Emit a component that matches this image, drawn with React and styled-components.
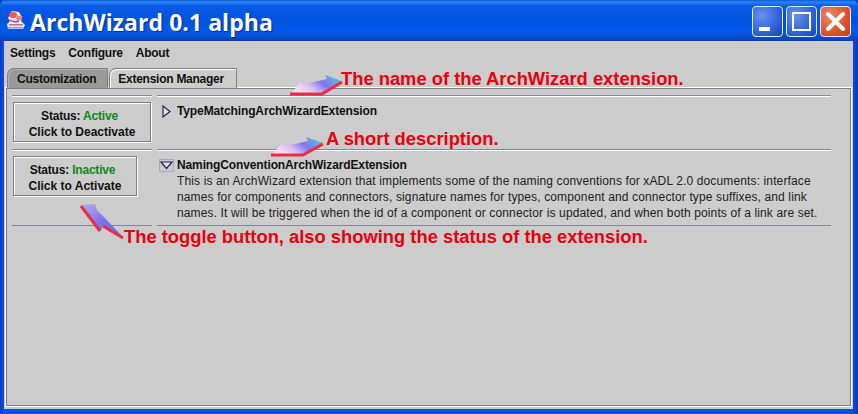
import React from "react";
import styled, { createGlobalStyle } from "styled-components";

const Global = createGlobalStyle`
  html, body { margin: 0; padding: 0; background: #0a3fd0; overflow: hidden; }
  #root { width: 858px; height: 414px; }
`;

const Frame = styled.div`
  position: relative;
  width: 858px;
  height: 414px;
  display: flex;
  flex-direction: column;
  background: linear-gradient(90deg, #0638c8 0, #0a50e4 4px, #0a50e4 852px, #0638c8 858px);
  font-family: "Liberation Sans", Arial, sans-serif;
  overflow: hidden;
`;

const TitleBar = styled.div`
  height: 41px;
  flex: none;
  display: flex;
  align-items: center;
  padding: 0 7px 0 6px;
  gap: 4px;
  border-radius: 6px 6px 0 0;
  background: linear-gradient(180deg, #0a55d8 0, #2a86f4 2px, #0a5ce6 6px, #0053e0 18px, #0058ea 32px, #0a46c8 39px, #0a3cb4 41px);
`;

const Title = styled.div`
  flex: 1;
  color: #fff;
  font-family: "Open Sans", sans-serif;
  font-weight: 700;
  font-size: 23px;
  line-height: 26px;
  letter-spacing: 0.05px;
  margin-top: 2px;
  text-shadow: 1px 1px 1px #0a2a90;
  white-space: nowrap;
`;

const WinButtons = styled.div`
  display: flex;
  gap: 3px;
  margin-top: 2px;
`;

const WinButton = styled.div`
  width: 31px;
  height: 31px;
  box-sizing: border-box;
  border: 1px solid #e8eefc;
  border-radius: 4px;
  display: flex;
  align-items: center;
  justify-content: center;
  background: ${(p) => (p.$close
    ? "radial-gradient(circle at 30% 30%, #e88a62, #d8502a 65%, #c23c18)"
    : "radial-gradient(circle at 30% 30%, #6a90ea, #2c5cd8 65%, #1c42b8)")};
`;

const Body = styled.div`
  flex: 1;
  min-height: 0;
  margin: 0 5px 5px 4px;
  background: #cccccc;
  display: flex;
  flex-direction: column;
`;

const MenuBar = styled.div`
  height: 23px;
  flex: none;
  display: flex;
  align-items: center;
  gap: 13px;
  padding-left: 6px;
  font-size: 12px;
  font-weight: 700;
  letter-spacing: -0.25px;
  color: #111;
`;

const Tabs = styled.div`
  display: flex;
  align-items: flex-end;
  height: 24px;
  flex: none;
  padding-left: 3px;
`;

const Tab = styled.div`
  height: 20px;
  box-sizing: border-box;
  padding: 0 ${(p) => (p.$selected ? 12 : 11)}px 0 ${(p) => (p.$selected ? 8 : 9)}px;
  display: flex;
  align-items: center;
  font-size: 12px;
  font-weight: 700;
  letter-spacing: -0.26px;
  color: #111;
  border: 1px solid #808080;
  border-bottom: none;
  border-radius: 7px 0 0 0;
  margin-right: 1px;
  position: relative;
  z-index: 1;
  background: ${(p) => (p.$selected ? "#cccccc" : "#9a9a9a")};
  box-shadow: inset 1px 1px 0 ${(p) => (p.$selected ? "#fff" : "#b0b0b0")};
`;

const TabPanel = styled.div`
  flex: 1;
  min-height: 0;
  margin: 0 2px 3px 2px;
  border: 1px solid #808080;
  padding: 7px 19px 0 5px;
  box-shadow: 0 0 0 1px #fff;
`;

const Grid = styled.div`
  display: grid;
  grid-template-columns: 140px 1fr;
  column-gap: 5px;
  margin-top: -1px;
`;

const Cell = styled.div`
  border-top: 1px solid #808a98;
  box-shadow: inset 0 1px 0 #fff;
  display: flex;
  min-height: ${(p) => p.$h}px;
  box-sizing: border-box;
  align-items: flex-start;
`;

const ToggleButton = styled.div`
  margin: 6px 0 0 1px;
  width: ${(p) => p.$w}px;
  height: 40px;
  padding-top: 3px;
  box-sizing: border-box;
  border: 1px solid #808080;
  box-shadow: 1px 1px 0 #fff, inset 1px 1px 0 #fff;
  display: flex;
  flex-direction: column;
  align-items: center;
  justify-content: center;
  font-size: 12px;
  line-height: 16px;
  font-weight: 700;
  color: #111;
`;

const StatusLine = styled.div`
  letter-spacing: -0.2px;
  margin-right: 5px;
`;

const Status = styled.span`
  color: #0f8a1a;
`;

const Ext = styled.div`
  display: flex;
  padding: ${(p) => p.$top}px 0 0 2px;
  gap: 3px;
`;

const Expander = styled.svg`
  width: 15px;
  height: 13px;
  flex: none;
  margin-top: 1px;
`;

const ExtName = styled.div`
  font-size: 12px;
  font-weight: 700;
  line-height: 15px;
  letter-spacing: -0.12px;
  color: #111;
`;

const ExtDesc = styled.div`
  font-size: 12px;
  line-height: 16px;
  color: #222;
  letter-spacing: 0.13px;
  white-space: nowrap;
`;

const Note = styled.div`
  position: absolute;
  left: ${(p) => p.$x}px;
  top: ${(p) => p.$y}px;
  color: #e8000f;
  font-size: 18.35px;
  line-height: 22px;
  font-weight: 700;
  white-space: nowrap;
`;

const Overlay = styled.svg`
  position: absolute;
  left: 0;
  top: 0;
  width: 858px;
  height: 414px;
  pointer-events: none;
`;

function AppIcon() {
  return (
    <svg width="20" height="21" viewBox="0 0 20 21">
      <path d="M2 8 L6 1 L13 2 L16 7 L15 11 L19 15 L17 19 L2 19 L1 14 L4 11 Z" fill="#f4e6ea" />
      <ellipse cx="7" cy="5" rx="4" ry="3" fill="#e05a60" />
      <ellipse cx="13" cy="8" rx="3" ry="2.5" fill="#e8868c" />
      <path d="M4 10 Q8 13 13 11" fill="none" stroke="#c84a5a" strokeWidth="1.5" />
      <path d="M3 14h14v1.5H3z" fill="#9a80a8" />
      <path d="M2 17h15v1.5H2z" fill="#a098b8" />
    </svg>
  );
}

function Arrow({ d, red, id }) {
  return (
    <>
      <path d={d} fill={`url(#${id})`} />
      <path d={red} fill="none" stroke="#ee2a44" strokeWidth="3" strokeLinejoin="round" />
    </>
  );
}

export default function App() {
  return (
    <Frame>
      <Global />
      <TitleBar>
        <AppIcon />
        <Title>ArchWizard 0.1 alpha</Title>
        <WinButtons>
          <WinButton>
            <svg width="29" height="29" viewBox="0 0 29 29"><rect x="6" y="20" width="11" height="4" fill="#fff" /></svg>
          </WinButton>
          <WinButton>
            <svg width="29" height="29" viewBox="0 0 29 29"><rect x="6" y="6" width="17" height="17" fill="none" stroke="#fff" strokeWidth="2" /><rect x="5" y="5" width="19" height="2" fill="#fff" /></svg>
          </WinButton>
          <WinButton $close>
            <svg width="29" height="29" viewBox="0 0 29 29"><path d="M7 7 L22 22 M22 7 L7 22" stroke="#fff" strokeWidth="4" strokeLinecap="round" /></svg>
          </WinButton>
        </WinButtons>
      </TitleBar>
      <Body>
        <MenuBar>
          <span>Settings</span>
          <span>Configure</span>
          <span>About</span>
        </MenuBar>
        <Tabs>
          <Tab>Customization</Tab>
          <Tab $selected>Extension Manager</Tab>
        </Tabs>
        <TabPanel>
          <Grid>
            <Cell $h={54}>
              <ToggleButton $w={138}>
                <StatusLine>Status: <Status>Active</Status></StatusLine>
                <div>Click to Deactivate</div>
              </ToggleButton>
            </Cell>
            <Cell $h={54}>
              <Ext $top={8}>
                <Expander viewBox="0 0 15 13"><path d="M4 1 L11 6.5 L4 12 Z" fill="#dfe3f0" stroke="#20284a" strokeWidth="1.2" /></Expander>
                <ExtName>TypeMatchingArchWizardExtension</ExtName>
              </Ext>
            </Cell>
            <Cell $h={76}>
              <ToggleButton $w={124}>
                <StatusLine>Status: <Status>Inactive</Status></StatusLine>
                <div>Click to Activate</div>
              </ToggleButton>
            </Cell>
            <Cell $h={76}>
              <Ext $top={8}>
                <Expander viewBox="0 0 15 13">
                  <rect x="0.5" y="0.5" width="14" height="12" fill="#c8c8d4" stroke="#a8a8c0" />
                  <path d="M2 3 L13 3 L7.5 9.5 Z" fill="#dfe3f0" stroke="#20284a" strokeWidth="1.2" />
                </Expander>
                <div>
                  <ExtName>NamingConventionArchWizardExtension</ExtName>
                  <ExtDesc>
                    This is an ArchWizard extension that implements some of the naming conventions for xADL 2.0 documents: interface<br />
                    names for components and connectors, signature names for types, component and connector type suffixes, and link<br />
                    names. It will be triggered when the id of a component or connector is updated, and when both points of a link are set.
                  </ExtDesc>
                </div>
              </Ext>
            </Cell>
            <Cell $h={1} />
            <Cell $h={1} />
          </Grid>
        </TabPanel>
      </Body>
      <Overlay viewBox="0 0 858 414">
        <defs>
          <linearGradient id="g1" x1="0.1" x2="1" y1="0.6" y2="0.2">
            <stop offset="0" stopColor="#fbd8ee" />
            <stop offset="0.25" stopColor="#d8c0f4" />
            <stop offset="0.55" stopColor="#8078ee" />
            <stop offset="1" stopColor="#58c0dc" />
          </linearGradient>
          <linearGradient id="g2" x1="0.1" x2="0.9" y1="0" y2="1">
            <stop offset="0" stopColor="#a8a8f0" />
            <stop offset="0.5" stopColor="#8070ec" />
            <stop offset="1" stopColor="#4a78d8" />
          </linearGradient>
        </defs>
        <Arrow id="g1" d="M342 81 L325 75 L327 79 L305 84 L300 82 L291 94 L322 93 Z" red="M290 94 L322 94 L342 82" />
        <Arrow id="g1" d="M323 143 L306 137 L308 141 L286 146 L281 144 L272 155 L304 154 Z" red="M271 155 L303 155 L323 144" />
        <Arrow id="g2" d="M82 205 L95 204 L97 210 L124 238 L103 225 L101 231 Z" red="M81 206 L100 231 M103 226 L123 238" />
      </Overlay>
      <Note $x={341} $y={68}>The name of the ArchWizard extension.</Note>
      <Note $x={326} $y={128}>A short description.</Note>
      <Note $x={124} $y={226}>The toggle button, also showing the status of the extension.</Note>
    </Frame>
  );
}
